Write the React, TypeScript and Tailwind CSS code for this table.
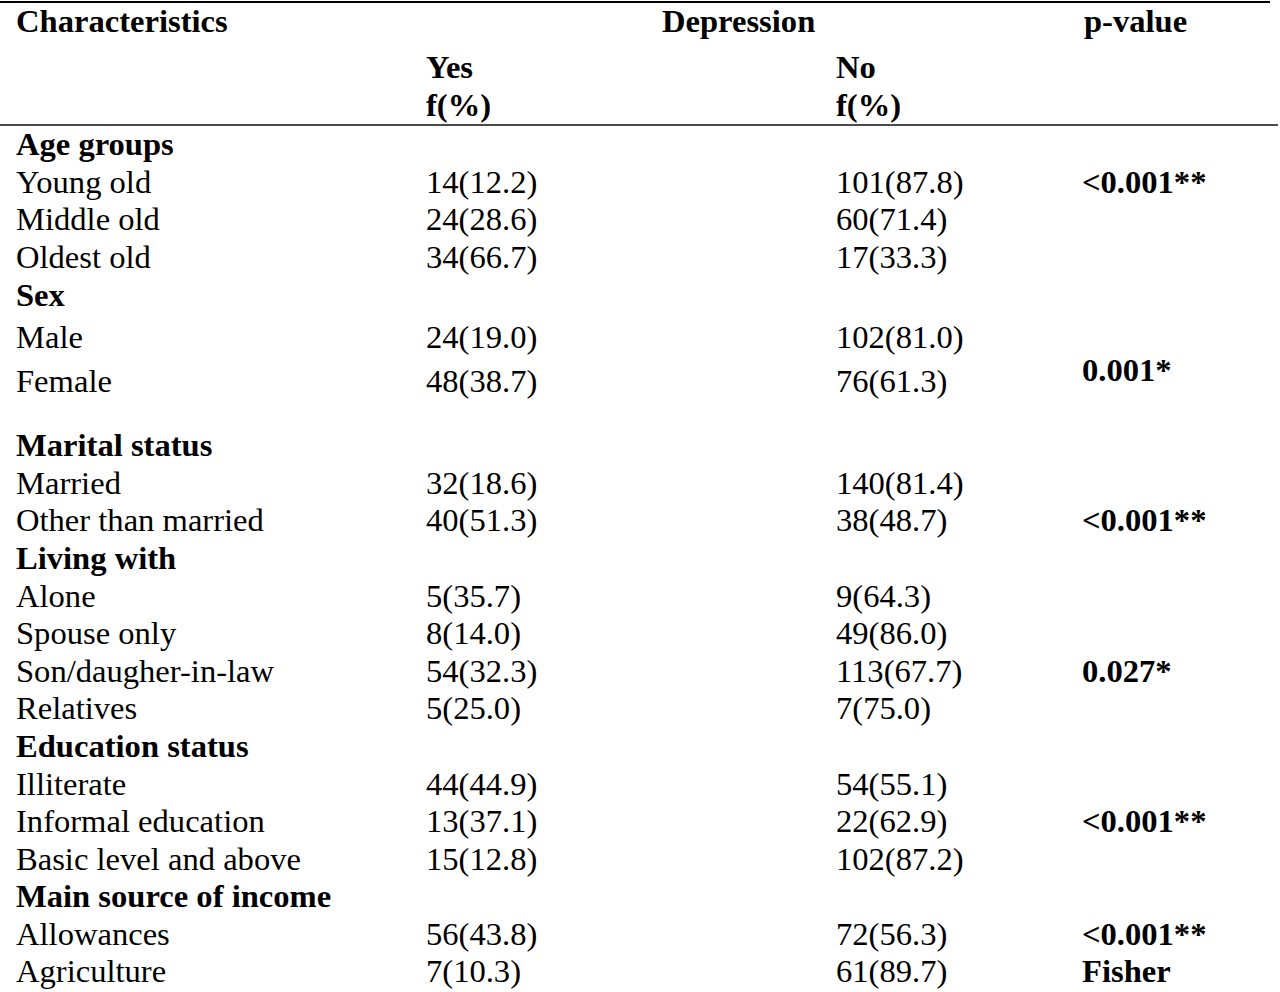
type Row = {
  label: string
  yes?: string
  no?: string
  p?: string
  heading?: boolean
  h?: string
}

const groups: Row[] = [
  { label: "Age groups", heading: true },
  { label: "Young old", yes: "14(12.2)", no: "101(87.8)", p: "<0.001**" },
  { label: "Middle old", yes: "24(28.6)", no: "60(71.4)" },
  { label: "Oldest old", yes: "34(66.7)", no: "17(33.3)" },
  { label: "Sex", heading: true, h: "h-[42.6px]" },
]

const rest: Row[] = [
  { label: "Marital status", heading: true },
  { label: "Married", yes: "32(18.6)", no: "140(81.4)" },
  { label: "Other than married", yes: "40(51.3)", no: "38(48.7)", p: "<0.001**" },
  { label: "Living with", heading: true },
  { label: "Alone", yes: "5(35.7)", no: "9(64.3)" },
  { label: "Spouse only", yes: "8(14.0)", no: "49(86.0)" },
  { label: "Son/daugher-in-law", yes: "54(32.3)", no: "113(67.7)", p: "0.027*" },
  { label: "Relatives", yes: "5(25.0)", no: "7(75.0)" },
  { label: "Education status", heading: true },
  { label: "Illiterate", yes: "44(44.9)", no: "54(55.1)" },
  { label: "Informal education", yes: "13(37.1)", no: "22(62.9)", p: "<0.001**" },
  { label: "Basic level and above", yes: "15(12.8)", no: "102(87.2)" },
  { label: "Main source of income", heading: true },
  { label: "Allowances", yes: "56(43.8)", no: "72(56.3)", p: "<0.001**" },
  { label: "Agriculture", yes: "7(10.3)", no: "61(89.7)", p: "Fisher" },
]

const cols = "grid grid-cols-[410px_410px_246px_1fr] pl-4"

function TableRow({ row }: { row: Row }) {
  return (
    <div className={`${cols} ${row.h ?? "h-[37.6px]"}`}>
      <div className={row.heading ? "font-bold" : ""}>{row.label}</div>
      <div>{row.yes}</div>
      <div>{row.no}</div>
      <div className="font-bold">{row.p}</div>
    </div>
  )
}

export default function App() {
  return (
    <div className="min-h-screen bg-white text-black text-[32.6px] leading-[37.6px] font-['Liberation_Serif','Times_New_Roman',serif] overflow-hidden">
      <div className="w-[1278px] pt-px">
        <div className="border-t-2 border-black mr-2">
          {/* header */}
          <div className={`${cols} h-[46px] font-bold`}>
            <div>Characteristics</div>
            <div className="col-span-2 pl-[236px]">Depression</div>
            <div className="pl-[2px]">p-value</div>
          </div>
          <div className={`${cols} h-[37.6px] font-bold`}>
            <div />
            <div>Yes</div>
            <div>No</div>
            <div />
          </div>
        </div>
        <div className={`${cols} font-bold border-b-2 border-[#4a4a4a]`}>
          <div />
          <div>f(%)</div>
          <div>f(%)</div>
          <div />
        </div>

        {groups.map((r) => (
          <TableRow key={r.label} row={r} />
        ))}

        {/* Male / Female share one p-value */}
        <div className={`${cols} grid-rows-[44px_64px]`}>
          <div>Male</div>
          <div>24(19.0)</div>
          <div>102(81.0)</div>
          <div className="row-span-2 self-center font-bold pb-1">0.001*</div>
          <div>Female</div>
          <div>48(38.7)</div>
          <div>76(61.3)</div>
        </div>

        {rest.map((r) => (
          <TableRow key={r.label} row={r} />
        ))}
      </div>
    </div>
  )
}
